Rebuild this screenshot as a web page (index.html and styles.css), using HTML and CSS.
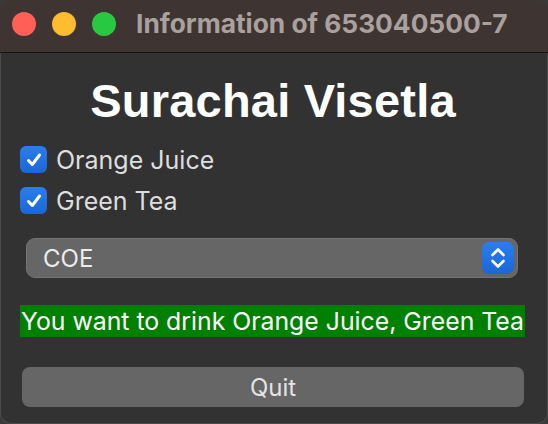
FILE: index.html
```html
<!DOCTYPE html>
<html>
<head>
<meta charset="utf-8">
<link rel="stylesheet" href="styles.css">
</head>
<body>
<div class="window">
  <div class="titlebar">
    <div class="lights">
      <span class="light red"></span>
      <span class="light yellow"></span>
      <span class="light green"></span>
    </div>
    <div class="title">Information of 653040500-7</div>
  </div>
  <div class="content">
    <h1 class="name">Surachai Visetla</h1>
    <div class="checks">
      <label class="check">
        <span class="box"><svg viewBox="0 0 20 20" width="20" height="20"><path d="M4.5 10.5 L8.3 14.5 L15.5 5" fill="none" stroke="#fff" stroke-width="3" stroke-linecap="round" stroke-linejoin="round"/></svg></span>
        <span class="check-text">Orange Juice</span>
      </label>
      <label class="check">
        <span class="box"><svg viewBox="0 0 20 20" width="20" height="20"><path d="M4.5 10.5 L8.3 14.5 L15.5 5" fill="none" stroke="#fff" stroke-width="3" stroke-linecap="round" stroke-linejoin="round"/></svg></span>
        <span class="check-text">Green Tea</span>
      </label>
    </div>
    <div class="select">
      <span class="select-text">COE</span>
      <span class="stepper"><svg viewBox="0 0 32 32" width="32" height="32"><path d="M10.5 13 L16 7.5 L21.5 13" fill="none" stroke="#fff" stroke-width="2.6" stroke-linecap="round" stroke-linejoin="round"/><path d="M10.5 19 L16 24.5 L21.5 19" fill="none" stroke="#fff" stroke-width="2.6" stroke-linecap="round" stroke-linejoin="round"/></svg></span>
    </div>
    <div class="result">You want to drink Orange Juice, Green Tea</div>
    <button class="quit">Quit</button>
  </div>
</div>
</body>
</html>
```

FILE: styles.css
```css
* { box-sizing: border-box; }
html, body {
  margin: 0;
  padding: 0;
  background: #3a3a3a;
}
.window {
  width: 548px;
  height: 424px;
  border-radius: 11px;
  overflow: hidden;
  background: #323232;
  box-shadow: inset 0 0 0 1px #4a4a4a;
  font-family: Inter, "Noto Sans", sans-serif;
}
.titlebar {
  height: 53px;
  background: #3e3532;
  border-bottom: 1px solid #141414;
  display: flex;
  align-items: flex-start;
  padding: 12px 0 0 12px;
}
.lights {
  display: flex;
  gap: 16px;
}
.light {
  width: 24px;
  height: 24px;
  border-radius: 50%;
  display: block;
}
.red { background: #fe5f57; }
.yellow { background: #febc2e; }
.green { background: #28c840; }
.title {
  margin-left: 20px;
  color: #aaa19e;
  font-size: 26.3px;
  font-weight: 700;
  line-height: 24px;
}
.content {
  padding: 0 22px 0 20px;
}
.name {
  margin: 22px 0 0;
  text-align: center;
  font-family: "Liberation Sans", Arial, sans-serif;
  font-weight: 700;
  font-size: 47px;
  line-height: 52px;
  letter-spacing: 0.2px;
  color: #ffffff;
}
.checks {
  margin-top: 19px;
  display: flex;
  flex-direction: column;
  gap: 14px;
}
.check {
  display: flex;
  align-items: center;
  gap: 9px;
  color: #dedede;
  font-size: 25px;
  height: 27px;
}
.box {
  width: 27px;
  height: 27px;
  border-radius: 6px;
  background: linear-gradient(#2a7ef0, #1b66d6);
  display: flex;
  align-items: center;
  justify-content: center;
}
.select {
  margin: 24px 8px 0 6px;
  height: 40px;
  border-radius: 9px;
  background: #666666;
  border: 1px solid #747474;
  display: flex;
  align-items: center;
  justify-content: space-between;
  padding: 0 3px 0 16px;
}
.select-text {
  color: #ececec;
  font-size: 24px;
}
.stepper {
  width: 32px;
  height: 32px;
  border-radius: 7px;
  background: linear-gradient(#2a7ef0, #1b66d6);
  display: flex;
}
.result {
  margin-top: 27px;
  background: #008000;
  color: #ffffff;
  font-size: 24.8px;
  line-height: 32px;
  padding-left: 1px;
  width: 505px;
  white-space: nowrap;
  overflow: hidden;
}
.quit {
  display: block;
  margin: 30px 0 0 2px;
  width: 502px;
  height: 40px;
  border: none;
  border-radius: 8px;
  background: #666666;
  color: #e4e4e4;
  font-family: Inter, "Noto Sans", sans-serif;
  font-size: 24px;
  padding: 0;
}
```
